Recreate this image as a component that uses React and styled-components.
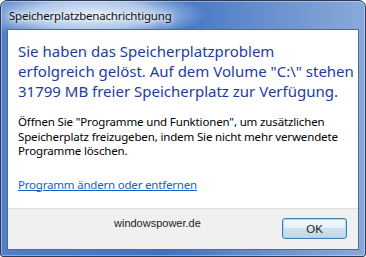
import styled, { createGlobalStyle } from 'styled-components';

const Global = createGlobalStyle`
  html, body { margin: 0; padding: 0; background: #fff; }
  * { box-sizing: border-box; }
`;

function App() {
  return (
    <>
      <Global />
      <Window>
        <TitleBar>
          <Title>Speicherplatzbenachrichtigung</Title>
        </TitleBar>
        <Client>
          <Content>
            <Heading>
              Sie haben das Speicherplatzproblem<br />
              erfolgreich gelöst. Auf dem Volume "C:\" stehen<br />
              31799 MB freier Speicherplatz zur Verfügung.
            </Heading>
            <Body>
              Öffnen Sie "Programme und Funktionen", um zusätzlichen<br />
              Speicherplatz freizugeben, indem Sie nicht mehr verwendete<br />
              Programme löschen.
            </Body>
            <Link href="#">Programm ändern oder entfernen</Link>
          </Content>
          <Footer>
            <Watermark>windowspower.de</Watermark>
            <Button>OK</Button>
          </Footer>
        </Client>
      </Window>
    </>
  );
}

const Window = styled.div`
  width: 366px;
  height: 257px;
  display: flex;
  flex-direction: column;
  border: 1px solid #2c3b57;
  border-radius: 7px 7px 3px 3px;
  padding: 0 6px 6px 6px;
  background:
    radial-gradient(ellipse 115px 26px at 90px 14px, rgba(235,242,252,0.95) 0%, rgba(220,232,248,0.7) 55%, rgba(220,232,248,0) 100%),
    linear-gradient(90deg, #4f80c8 0%, #3f72c2 45%, #6a92cf 75%, #8aa9da 100%);
  box-shadow: inset 0 0 0 1px rgba(255,255,255,0.35);
`;

const TitleBar = styled.div`
  height: 28px;
  display: flex;
  align-items: center;
  padding-left: 2px;
`;

const Title = styled.span`
  font-family: "Noto Sans", sans-serif;
  font-size: 11.5px;
  color: #111;
  letter-spacing: -0.2px;
  text-shadow: 0 0 8px #fff, 0 0 4px #fff;
`;

const Client = styled.div`
  flex: 1;
  display: flex;
  flex-direction: column;
  border: 1px solid #54698e;
  background: #fff;
`;

const Content = styled.div`
  flex: 1;
  padding: 11px 10px 0 10px;
  font-family: "Noto Sans", sans-serif;
`;

const Heading = styled.div`
  font-size: 15px;
  line-height: 20px;
  color: #1c3ca2;
  white-space: nowrap;
  letter-spacing: 0;
`;

const Body = styled.div`
  margin-top: 14px;
  font-size: 11.5px;
  line-height: 14.5px;
  color: #000;
  white-space: nowrap;
  letter-spacing: -0.15px;
`;

const Link = styled.a`
  display: inline-block;
  margin-top: 18px;
  font-size: 11.5px;
  color: #0f62c8;
  text-decoration: underline;
  letter-spacing: -0.2px;
`;

const Footer = styled.div`
  height: 41px;
  flex: none;
  display: flex;
  align-items: flex-start;
  justify-content: space-between;
  padding: 8px 11px 0 106px;
  background: #f0f0f0;
  border-top: 1px solid #dfdfdf;
`;

const Watermark = styled.span`
  font-family: "Liberation Sans", Arial, sans-serif;
  font-size: 11px;
  color: #222;
  margin-top: 0;
`;

const Button = styled.button`
  width: 65px;
  height: 21px;
  margin-top: 1px;
  padding: 0;
  border: 1px solid #3c7fb1;
  border-radius: 3px;
  background: linear-gradient(#f4f9fc 0%, #e6f2fa 45%, #cfe2ee 50%, #c0d6e4 100%);
  box-shadow: inset 0 0 0 1px #9fdcf6;
  font-family: "Liberation Sans", Arial, sans-serif;
  font-size: 11.5px;
  color: #222;
`;

export default App;
